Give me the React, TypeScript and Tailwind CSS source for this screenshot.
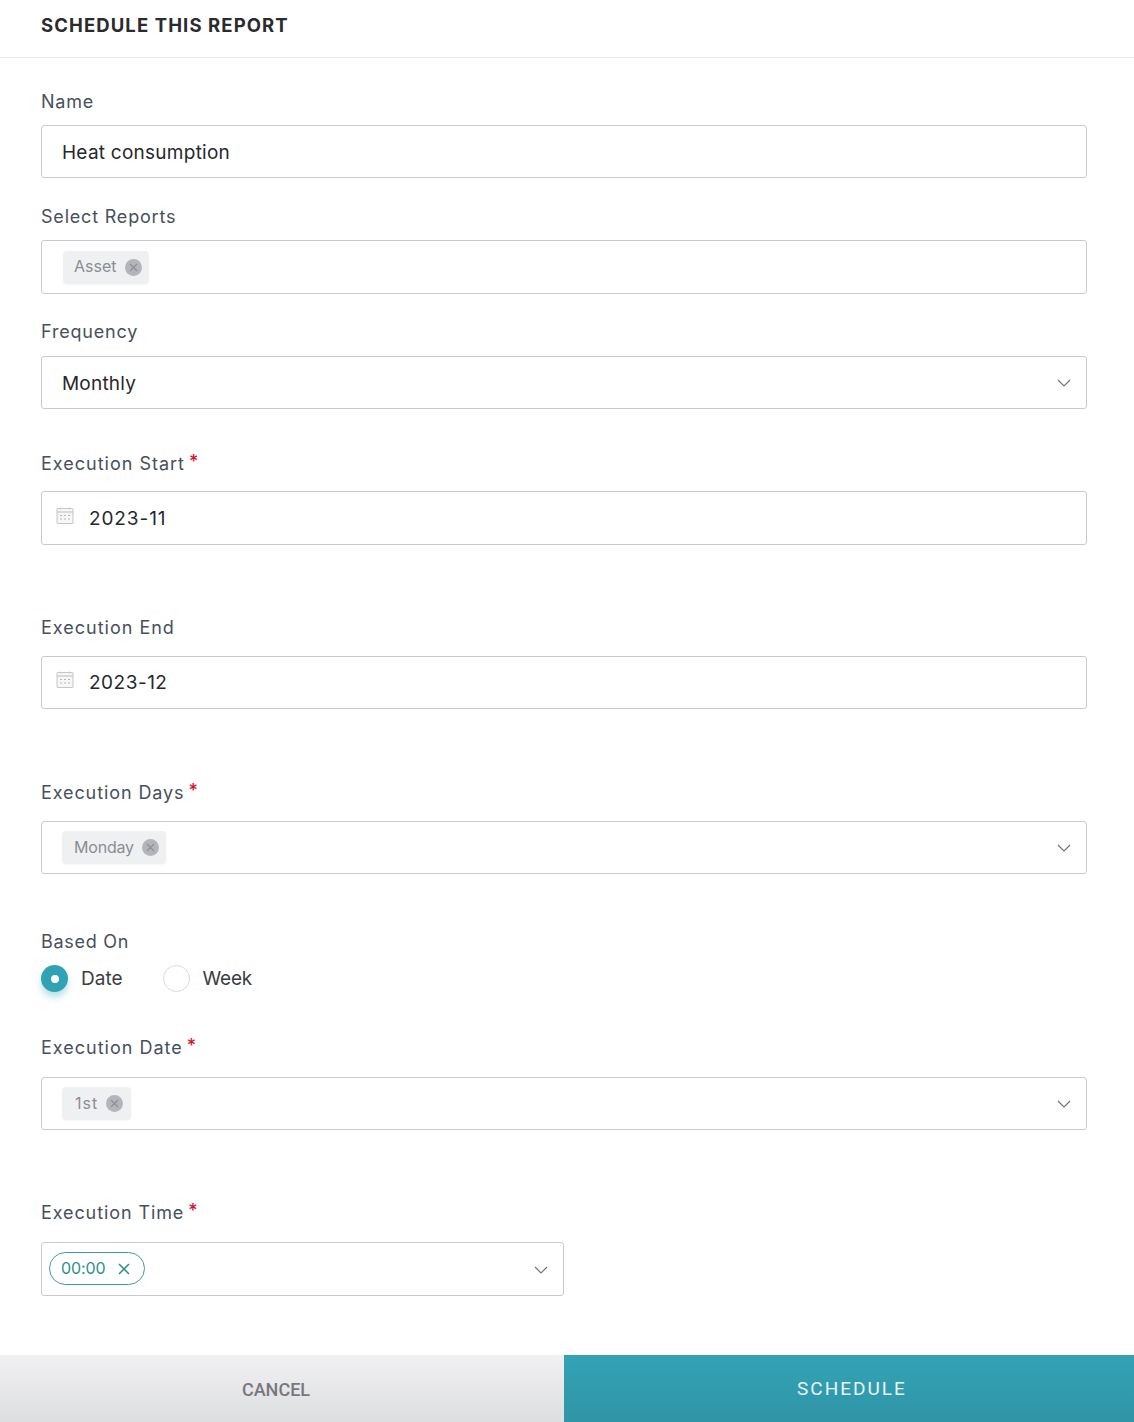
import React from "react";

const Chevron = () => (
  <svg width="14" height="8" viewBox="0 0 14 8" fill="none" className="shrink-0 mt-[1px]">
    <path d="M1 1l6 6 6-6" stroke="#6f7480" strokeWidth="1.2" />
  </svg>
);

const CalendarIcon = () => (
  <svg width="18" height="18" viewBox="0 0 18 18" fill="none" className="shrink-0 mb-[5px]">
    <rect x="1" y="1.5" width="16" height="15" rx="0.5" fill="#f7f7f8" stroke="#c4c5c9" />
    <path d="M1 5h16" stroke="#c4c5c9" strokeWidth="1.2" />
    <path d="M4.5 0.5v2M13.5 0.5v2" stroke="#c4c5c9" />
    <path d="M4 8.5h2M8 8.5h2M12 8.5h2M4 12h2M8 12h2M12 12h2" stroke="#b3b4b9" />
  </svg>
);

const Label = ({
  text,
  required,
  className = "mb-[11px] tracking-[0.8px]",
}: {
  text: string;
  required?: boolean;
  className?: string;
}) => (
  <div className={`h-6 flex text-[18px] leading-6 text-[#47505c] ${className}`}>
    {text}
    {required && (
      <span className="ml-[4px] -mt-[2px] text-[18px] font-medium tracking-normal text-[#d0142c]">*</span>
    )}
  </div>
);

const Box = ({
  className,
  children,
}: {
  className: string;
  children?: React.ReactNode;
}) => (
  <div
    className={`flex items-center border border-[#c9cace] rounded-[3px] bg-white ${className}`}
  >
    {children}
  </div>
);

const Tag = ({ text, className }: { text: string; className: string }) => (
  <div
    className={`flex items-center h-[33px] rounded-[4px] bg-[#eff0f2] text-[16px] text-[#8b8d93] shadow-[0_1px_2px_rgba(0,0,0,0.04)] ${className}`}
  >
    <span className="pb-[2px]">{text}</span>
    <span className="ml-2 flex items-center justify-center w-[17px] h-[17px] rounded-full bg-[#b4b5ba]">
      <svg width="9" height="9" viewBox="0 0 9 9" fill="none">
        <path d="M1 1l7 7M8 1L1 8" stroke="#8e8f95" strokeWidth="1.2" />
      </svg>
    </span>
  </div>
);

export default function App() {
  return (
    <div
      className="w-[1134px] h-[1422px] bg-white flex flex-col overflow-hidden"
      style={{ fontFamily: "Inter, sans-serif" }}
    >
      <div className="h-[58px] shrink-0 border-b border-[#ececee] pl-[41px] pt-[13px] text-[18.5px] leading-6 font-bold tracking-[1.1px] text-[#2a2b2f]">
        SCHEDULE THIS REPORT
      </div>

      <div className="flex-1 pl-[41px] pr-[47px] pt-[32px]">
        <Label text="Name" />
        <Box className="h-[53px] pl-5 pt-1 text-[19px] tracking-[0.25px] text-[#26282c]">
          Heat consumption
        </Box>

        <div className="mt-[27px]">
          <Label text="Select Reports" />
          <Box className="h-[54px] pl-[21px]">
            <Tag text="Asset" className="w-[86px] pl-[11px]" />
          </Box>
        </div>

        <div className="mt-[26px]">
          <Label text="Frequency" className="mb-[12px] tracking-[0.8px]" />
          <Box className="h-[53px] pl-5 pr-[15px] justify-between text-[19px] tracking-[0.2px] text-[#26282c]">
            <span className="pt-1">Monthly</span>
            <Chevron />
          </Box>
        </div>

        <div className="mt-[43px]">
          <Label text="Execution Start" required className="mb-[15px] tracking-[1px]" />
          <Box className="h-[54px] pl-[14px] text-[19px] tracking-[0.9px] text-[#26282c]">
            <CalendarIcon />
            <span className="ml-[15px] pt-[2px]">2023-11</span>
          </Box>
        </div>

        <div className="mt-[71px]">
          <Label text="Execution End" className="mb-[16px] tracking-[1px]" />
          <Box className="h-[53px] pl-[14px] text-[19px] tracking-[0.5px] text-[#26282c]">
            <CalendarIcon />
            <span className="ml-[15px] pt-[2px]">2023-12</span>
          </Box>
        </div>

        <div className="mt-[72px]">
          <Label text="Execution Days" required className="mb-[16px] tracking-[0.9px]" />
          <Box className="h-[53px] pl-[20px] pr-[15px] justify-between">
            <Tag text="Monday" className="w-[104px] pl-[12px] tracking-[-0.2px]" />
            <Chevron />
          </Box>
        </div>

        <div className="mt-[56px]">
          <div className="h-6 text-[18px] leading-6 tracking-[0.7px] text-[#47505c]">
            Based On
          </div>
          <div className="mt-[11px] flex items-center h-[27px] text-[19px] text-[#3a3d43]">
            <span className="flex items-center justify-center w-[27px] h-[27px] rounded-full bg-[#2fa3b5] shadow-[0_5px_7px_rgba(47,163,181,0.35)]">
              <span className="w-[8px] h-[8px] rounded-full bg-white" />
            </span>
            <span className="ml-[13px] pt-[2px]">Date</span>
            <span className="ml-[40px] w-[27px] h-[27px] rounded-full border border-[#d8d9dc] bg-white" />
            <span className="ml-[13px] pt-[2px] tracking-[-0.2px]">Week</span>
          </div>
        </div>

        <div className="mt-[44px]">
          <Label text="Execution Date" required className="mb-[17px] tracking-[1px]" />
          <Box className="h-[53px] pl-[20px] pr-[15px] justify-between">
            <Tag text="1st" className="w-[69px] pl-[13px] tracking-[1px]" />
            <Chevron />
          </Box>
        </div>

        <div className="mt-[71px]">
          <Label text="Execution Time" required className="mb-[17px] tracking-[0.9px]" />
          <Box className="h-[54px] w-[523px] pl-[7px] pr-[15px] justify-between">
            <div className="flex items-center h-[33px] w-[96px] pl-[11px] mb-[2px] rounded-full border border-[#3f9c9c] text-[16px] tracking-[-0.1px] text-[#2c8f8f]">
              <span>00:00</span>
              <svg width="12" height="12" viewBox="0 0 12 12" fill="none" className="ml-[12px] mt-[2px]">
                <path d="M1 1l10 10M11 1L1 11" stroke="#2c8f8f" strokeWidth="1.5" />
              </svg>
            </div>
            <Chevron />
          </Box>
        </div>
      </div>

      <div className="h-[67px] shrink-0 flex">
        <div
          className="w-[564px] flex items-center justify-center pr-[12px] pt-[2px] bg-gradient-to-b from-[#f1f1f3] to-[#dddee0] text-[18px] font-medium text-[#77787e]"
          style={{ fontFamily: "Roboto, sans-serif" }}
        >
          CANCEL
        </div>
        <div
          className="flex-1 flex items-center justify-center pl-[6px] pt-[2px] bg-gradient-to-b from-[#33a3b5] to-[#2f95a7] text-[19px] tracking-[2px] text-[#e6f6f8]"
          style={{ fontFamily: "Roboto, sans-serif" }}
        >
          SCHEDULE
        </div>
      </div>
    </div>
  );
}
